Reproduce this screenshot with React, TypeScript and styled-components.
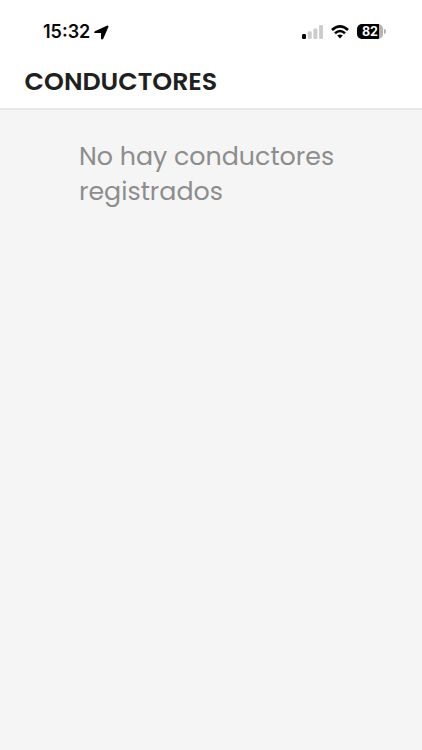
import React from "react";
import styled, { createGlobalStyle } from "styled-components";

const GlobalStyle = createGlobalStyle`
  * { box-sizing: border-box; }
  html, body { margin: 0; background: #f5f5f5; }
  body { font-family: Inter, "Liberation Sans", sans-serif; overflow: hidden; }
`;

const Screen = styled.div`
  display: flex;
  flex-direction: column;
  height: 750px;
  width: 100%;
  background: #f5f5f5;
`;

const Header = styled.header`
  height: 110px;
  background: #fff;
  border-bottom: 2px solid #e8e8e8;
`;

const StatusBar = styled.div`
  display: flex;
  align-items: center;
  justify-content: space-between;
  height: 64px;
  padding: 0 36px 0 43px;
`;

const StatusGroup = styled.div<{ $gap: number }>`
  display: flex;
  align-items: center;
  gap: ${({ $gap }) => $gap}px;
`;

const Clock = styled.span`
  font-size: 18px;
  line-height: 22px;
  font-weight: 600;
  color: #080808;
`;

const Glyph = styled.svg`
  display: block;
  flex: none;
`;

const Battery = styled.div`
  display: flex;
  align-items: center;
  gap: 1px;
  margin-bottom: 1px;
`;

const BatteryBody = styled.div`
  display: flex;
  align-items: center;
  justify-content: center;
  width: 26px;
  height: 15px;
  border-radius: 5px;
  background: linear-gradient(90deg, #000 84%, #b3b3b3 84%);
  color: #fff;
  font-size: 12.5px;
  line-height: 15px;
  font-weight: 700;
`;

const BatteryTip = styled.div`
  width: 2px;
  height: 5px;
  border-radius: 0 2px 2px 0;
  background: #b3b3b3;
`;

const Title = styled.h1`
  margin: 0;
  padding: 0 24.6px;
  font-family: Poppins, Inter, sans-serif;
  font-size: 25.3px;
  line-height: 35px;
  font-weight: 600;
  color: #202020;
`;

const Content = styled.main`
  flex: 1;
  padding: 29px 79px;
`;

const EmptyMessage = styled.p`
  margin: 0;
  font-family: Poppins, Inter, sans-serif;
  font-size: 25.3px;
  line-height: 35px;
  white-space: nowrap;
  color: #8d8d8d;
`;

export default function App() {
  return (
    <>
      <GlobalStyle />
      <Screen>
        <Header>
          <StatusBar>
            <StatusGroup $gap={4}>
              <Clock>15:32</Clock>
              <Glyph width="15" height="15" viewBox="0 0 15 15">
                <path
                  d="M1.2 7 13.1 1.3q.8-.3.6.5L8.6 13.4q-.6.8-.9-.1V7.4H1.6Q.5 7.3 1.2 7Z"
                  fill="#000"
                  stroke="#000"
                  strokeWidth="1.4"
                  strokeLinejoin="round"
                />
              </Glyph>
            </StatusGroup>
            <StatusGroup $gap={8}>
              <Glyph width="21" height="14" viewBox="0 0 21 14">
                <rect x="0" y="9" width="4" height="5" rx="1.2" fill="#000" />
                <rect x="5.7" y="6.3" width="4" height="7.7" rx="1.2" fill="#ccc" />
                <rect x="11.4" y="3.4" width="4" height="10.6" rx="1.2" fill="#ccc" />
                <rect x="17.1" y="0" width="3.9" height="14" rx="1.2" fill="#ccc" />
              </Glyph>
              <Glyph width="18" height="14" viewBox="0 0 18 14" fill="none" stroke="#000" strokeWidth="2.5">
                <path d="M1 5Q9-2.3 17 5M4 8.2Q9 3.8 14 8.2" />
                <path d="M9 13.4 6.2 10.6Q9 8.5 11.8 10.6Z" fill="#000" stroke="none" />
              </Glyph>
              <Battery>
                <BatteryBody>82</BatteryBody>
                <BatteryTip />
              </Battery>
            </StatusGroup>
          </StatusBar>
          <Title>CONDUCTORES</Title>
        </Header>
        <Content>
          <EmptyMessage>
            No hay conductores
            <br />
            registrados
          </EmptyMessage>
        </Content>
      </Screen>
    </>
  );
}
